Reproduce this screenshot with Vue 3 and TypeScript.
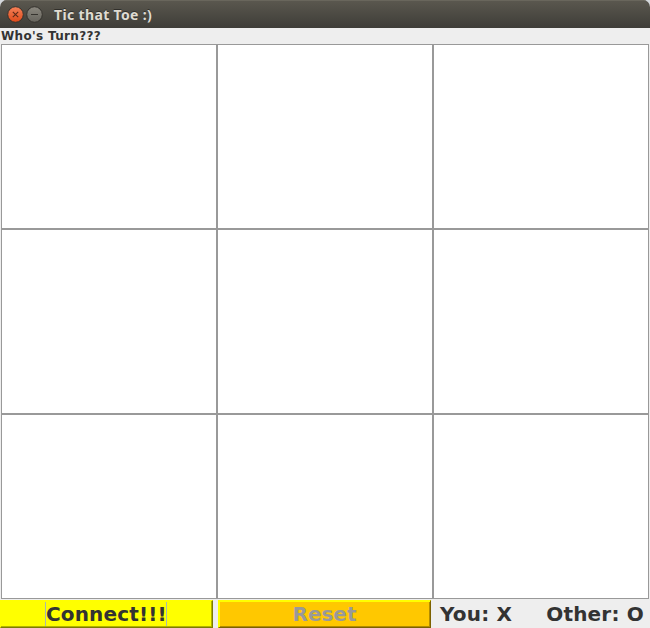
<script setup lang="ts">
import { ref } from 'vue'

const title = ref('Tic that Toe :)')
const status = ref("Who's Turn???")
const cells = ref<string[]>(Array(9).fill(''))
</script>

<template>
  <div class="window">
    <header class="titlebar">
      <svg class="controls" width="40" height="20" viewBox="0 0 40 20">
        <defs>
          <linearGradient id="closeFill" x1="0" y1="0" x2="0" y2="1">
            <stop offset="0" stop-color="#f58158" />
            <stop offset="1" stop-color="#df4a1a" />
          </linearGradient>
          <linearGradient id="minFill" x1="0" y1="0" x2="0" y2="1">
            <stop offset="0" stop-color="#8b887f" />
            <stop offset="1" stop-color="#66645d" />
          </linearGradient>
        </defs>
        <circle cx="10.5" cy="10.5" r="7.8" fill="url(#closeFill)" stroke="#35332e" stroke-width="1" />
        <path d="M7.8 7.8l5.4 5.4M13.2 7.8l-5.4 5.4" stroke="#5c2a18" stroke-width="1.1" />
        <circle cx="29.5" cy="10.5" r="7.8" fill="url(#minFill)" stroke="#35332e" stroke-width="1" />
        <path d="M26 10.5h7" stroke="#36342f" stroke-width="1" />
      </svg>
      <span class="title">{{ title }}</span>
    </header>
    <div class="status">{{ status }}</div>
    <main class="board">
      <div v-for="(cell, i) in cells" :key="i" class="cell">{{ cell }}</div>
    </main>
    <footer class="bar">
      <button class="btn connect"><span class="focus">Connect!!!</span></button>
      <button class="btn reset" disabled>Reset</button>
      <div class="players">
        <span>You: X</span>
        <span>Other: O</span>
      </div>
    </footer>
  </div>
</template>

<style>
body {
  margin: 0;
  background: #d4d8dc;
  overflow: hidden;
}
</style>

<style scoped>
.window {
  width: 650px;
  height: 628px;
  display: flex;
  flex-direction: column;
  background: #eeeeee;
  border-radius: 7px 7px 0 0;
  overflow: hidden;
  color: #333333;
  font-family: "DejaVu Sans", sans-serif;
  font-weight: bold;
}
.titlebar {
  height: 28px;
  flex: none;
  box-sizing: border-box;
  display: flex;
  align-items: center;
  padding: 0 5px;
  gap: 9px;
  background: linear-gradient(#5b584f, #3e3d38);
  box-shadow: inset 0 1px #69665c;
}
.controls {
  display: block;
  flex: none;
}
.title {
  color: #dfdbd2;
  font: 700 14px/18px "Noto Sans", sans-serif;
  letter-spacing: 0.35px;
  text-shadow: 0 -1px #302f2b;
  padding-top: 2px;
  white-space: nowrap;
}
.status {
  height: 16px;
  flex: none;
  font-size: 12px;
  line-height: 16px;
  letter-spacing: 0.33px;
  padding-left: 1px;
  white-space: nowrap;
}
.board {
  height: 555px;
  flex: none;
  display: grid;
  grid-template-columns: repeat(3, 216px);
  grid-template-rows: repeat(3, 185px);
  padding: 0 1px;
}
.cell {
  border: 1px solid #999999;
  background: #ffffff;
}
.bar {
  display: grid;
  grid-template-columns: 213px 213px 1fr;
  column-gap: 5px;
  height: 28px;
  padding-top: 1px;
  font-size: 20px;
}
.btn {
  height: 28px;
  padding: 0;
  border: 1px solid;
  font: inherit;
  line-height: 24px;
  color: #333333;
  display: flex;
  align-items: center;
  justify-content: center;
}
.connect {
  background: #ffff00;
  border-color: #ffff00 #7c7c00 #7c7c00 #ffff00;
  box-shadow: inset -1px -1px #b2b200;
}
.focus {
  box-sizing: border-box;
  width: 122px;
  height: 24px;
  margin-right: 1px;
  border: 1px solid #a9b9ae;
  border-width: 0 1px;
  letter-spacing: 0.15px;
}
.reset {
  color: #999999;
  background: #ffc800;
  border-color: #ffff00 #7c6100 #7c6100 #ffff00;
  box-shadow: inset 1px 1px #ffff00, inset -1px -1px #b28b00;
}
.players {
  display: flex;
  justify-content: space-between;
  line-height: 28px;
  padding: 0 6px 0 4px;
  letter-spacing: 0.2px;
  white-space: nowrap;
}
</style>
